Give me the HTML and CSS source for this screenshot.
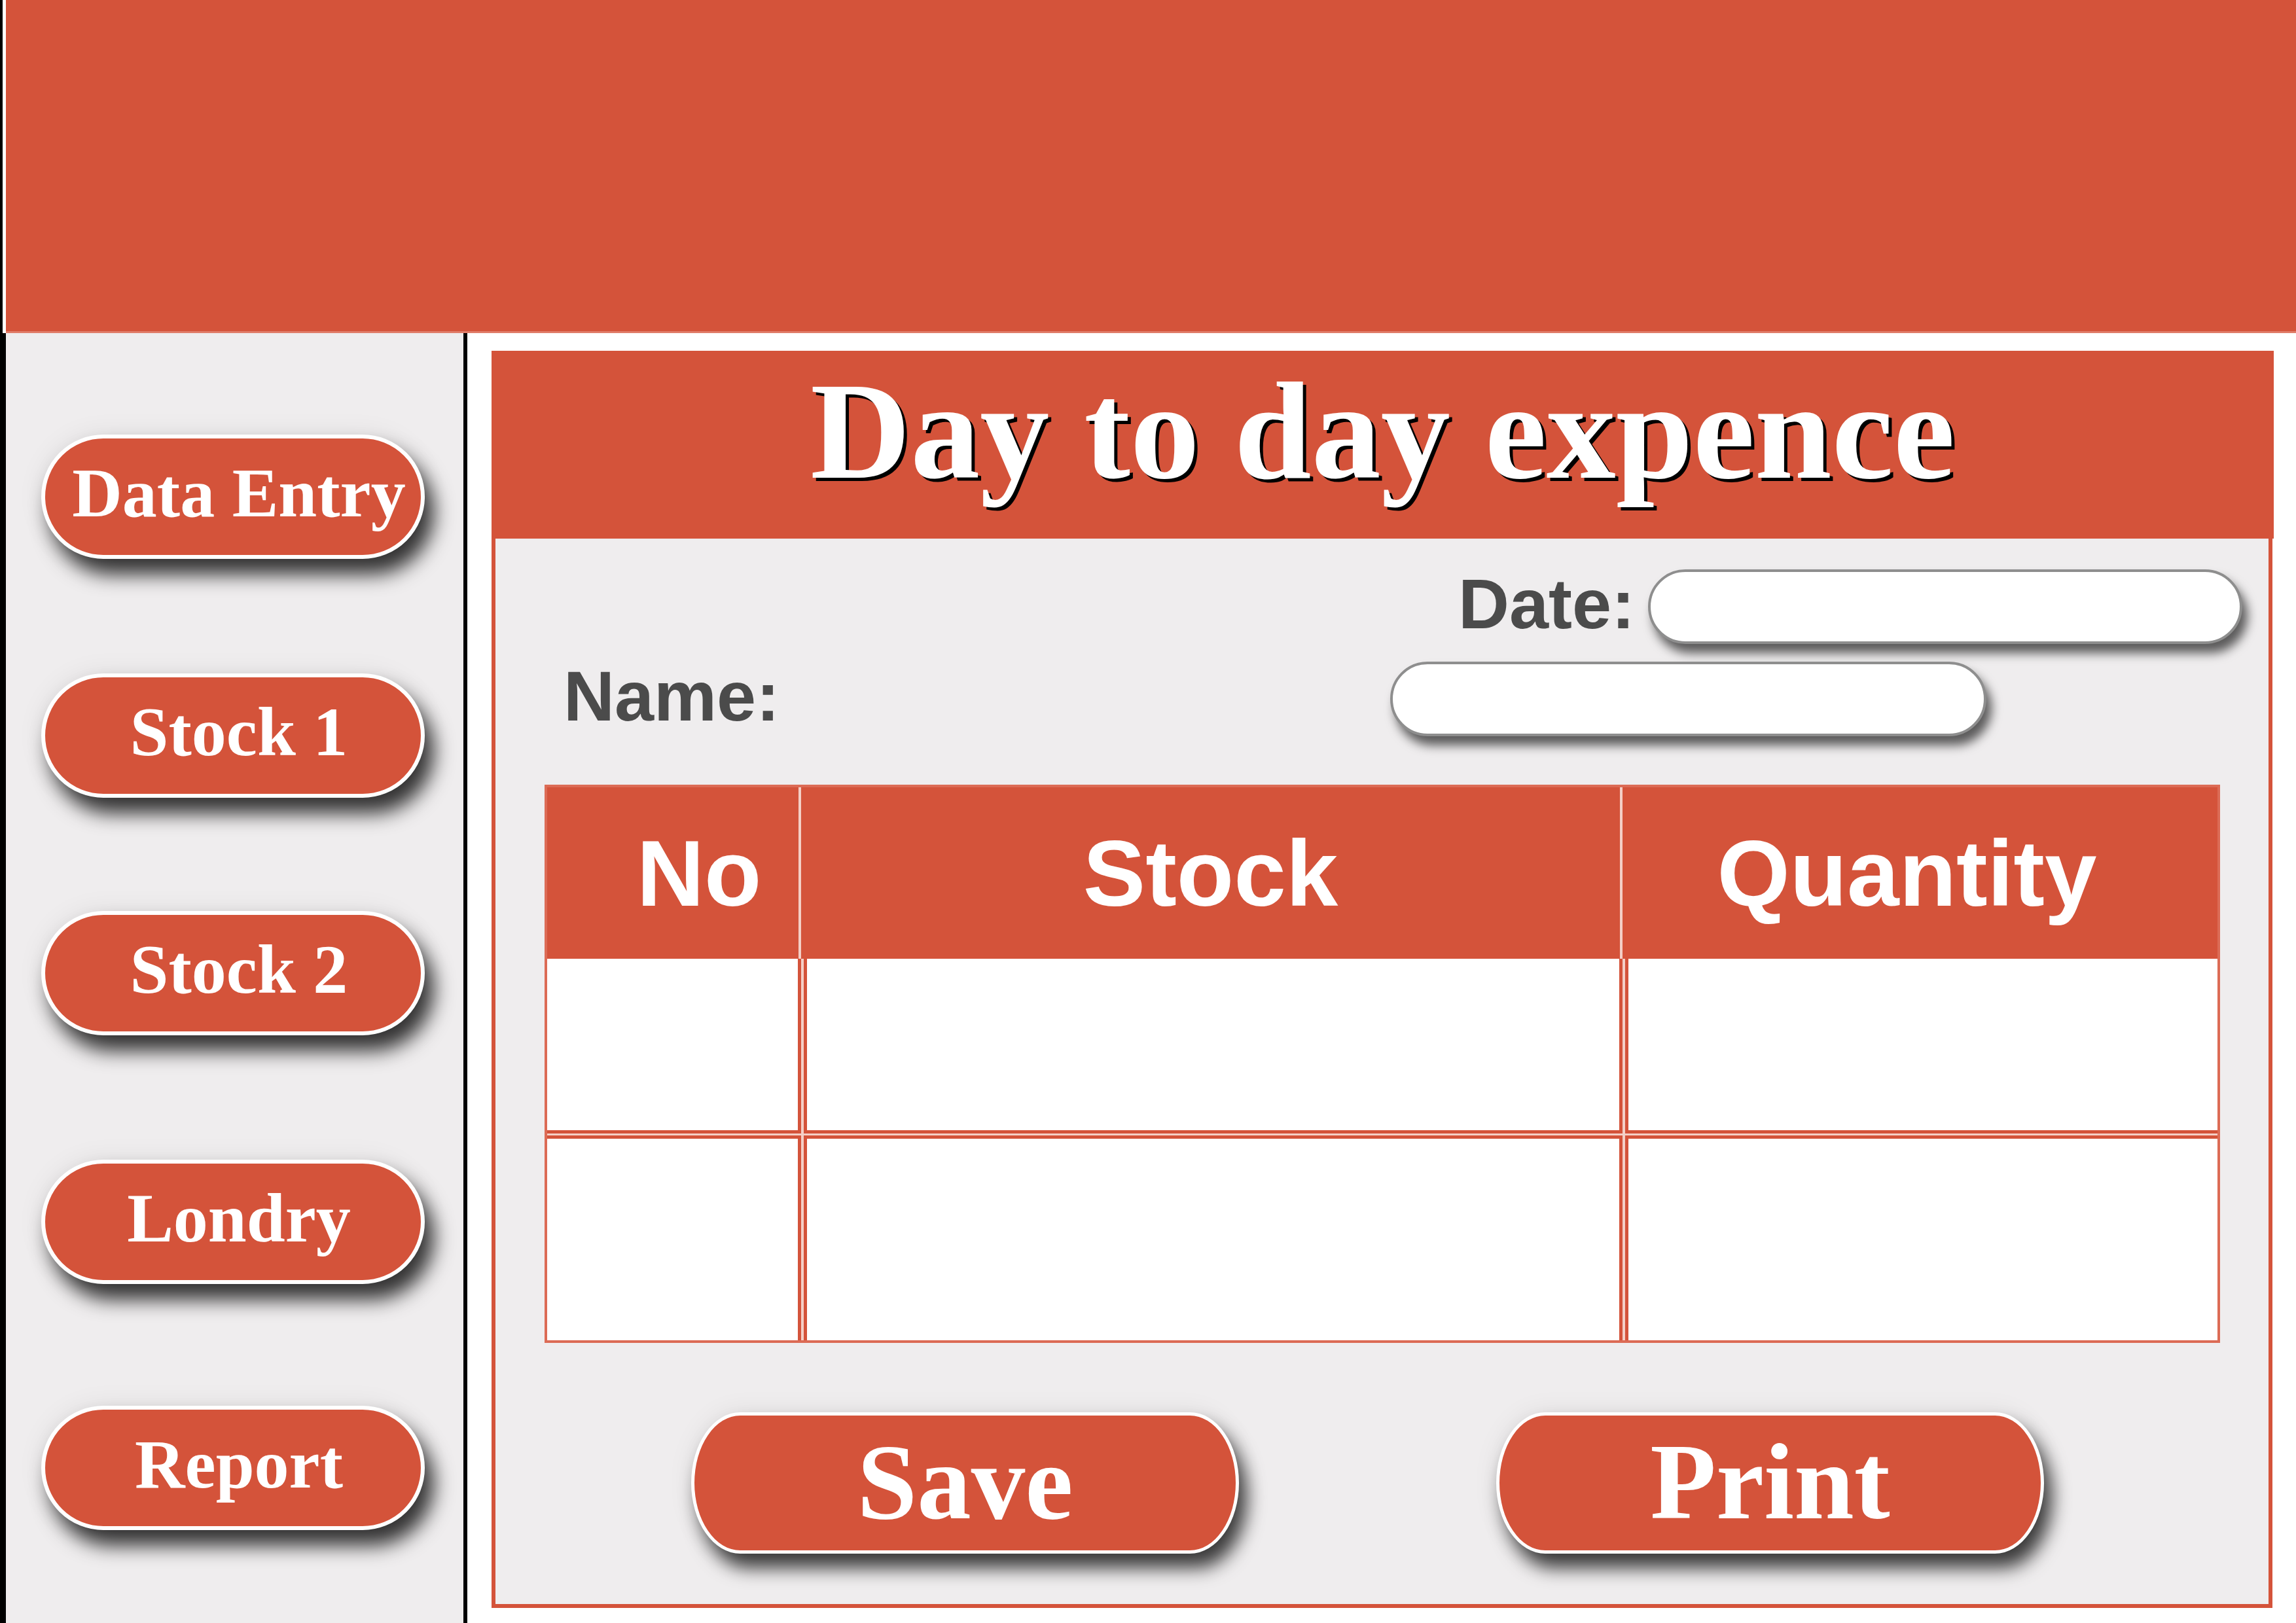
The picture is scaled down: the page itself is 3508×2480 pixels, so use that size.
FILE: index.html
```html
<!DOCTYPE html>
<html lang="en">
<head>
<meta charset="utf-8">
<title>Day to day expence</title>
<link rel="stylesheet" href="styles.css">
</head>
<body>
<div class="page">
  <header class="topbar"></header>
  <div class="lower">
    <nav class="sidebar">
      <button class="nav-btn nav-1">Data Entry</button>
      <button class="nav-btn nav-2">Stock 1</button>
      <button class="nav-btn nav-3">Stock 2</button>
      <button class="nav-btn nav-4">Londry</button>
      <button class="nav-btn nav-5">Report</button>
    </nav>
    <div class="divider"></div>
    <main class="main">
      <section class="panel">
        <h1 class="panel-title">Day to day expence</h1>
        <div class="panel-body">
          <div class="row-date">
            <label class="field-label">Date:</label>
            <div class="field date-field"></div>
          </div>
          <div class="row-name">
            <label class="field-label">Name:</label>
            <div class="field name-field"></div>
          </div>
          <div class="tbl">
            <div class="th th-no">No</div>
            <div class="th">Stock</div>
            <div class="th th-qty">Quantity</div>
            <div class="td r1 c1"></div>
            <div class="td r1 c2"></div>
            <div class="td r1 c3"></div>
            <div class="td r2 c1"></div>
            <div class="td r2 c2"></div>
            <div class="td r2 c3"></div>
          </div>
          <div class="actions">
            <button class="act-btn">Save</button>
            <button class="act-btn">Print</button>
          </div>
        </div>
      </section>
    </main>
  </div>
</div>
</body>
</html>
```

FILE: styles.css
```css
* { box-sizing: border-box; }

html, body {
  margin: 0;
  padding: 0;
}

body {
  width: 3508px;
  height: 2480px;
  overflow: hidden;
  background: #ffffff;
  border-left: 4px solid #000000;
  font-family: "Liberation Serif", "Times New Roman", serif;
}

.page {
  display: flex;
  flex-direction: column;
  height: 2480px;
}

.topbar {
  height: 509px;
  margin-left: 5px;
  background: #d4533a;
  border-bottom: 3px solid #e07d69;
  flex: none;
}

.lower {
  flex: 1;
  display: flex;
}

.sidebar {
  width: 704px;
  flex: none;
  background: #efedee;
  border-left: 5px solid #000000;
  padding: 0 0 0 54px;
  display: flex;
  flex-direction: column;
}

.nav-1 { margin-top: 155px; }
.nav-2 { margin-top: 175px; }
.nav-3 { margin-top: 173px; }
.nav-4 { margin-top: 190px; }
.nav-5 { margin-top: 186px; }

.nav-btn {
  width: 586px;
  height: 190px;
  flex: none;
  border: 6px solid #ffffff;
  border-radius: 95px;
  background: #d4533a;
  color: #ffffff;
  font-family: "Liberation Serif", "Times New Roman", serif;
  font-weight: bold;
  font-size: 106px;
  line-height: 1;
  padding: 0 0 10px 18px;
  box-shadow: 0 0 40px rgba(0, 0, 0, 0.07), 14px 24px 30px rgba(0, 0, 0, 0.78);
  display: flex;
  align-items: center;
  justify-content: center;
  white-space: nowrap;
}

.divider {
  width: 6px;
  flex: none;
  background: #000000;
}

.main {
  flex: 1;
  padding: 27px 34px 0 37px;
}

.panel {
  width: 2723px;
}

.panel-title {
  margin: 0;
  height: 287px;
  background: #d4533a;
  color: #ffffff;
  font-family: "Liberation Serif", "Times New Roman", serif;
  font-weight: bold;
  font-size: 212px;
  line-height: 212px;
  padding-top: 17px;
  text-align: center;
  text-shadow: 5px 5px 0 #000000;
  white-space: nowrap;
}

.panel-body {
  width: 2721px;
  background: #efedee;
  border-left: 6px solid #d4533a;
  border-right: 6px solid #d4533a;
  border-bottom: 6px solid #d4533a;
  padding: 47px 0 77px 0;
  display: flex;
  flex-direction: column;
}

.row-date {
  display: flex;
  justify-content: flex-end;
  align-items: center;
  gap: 20px;
  padding-right: 40px;
  height: 114px;
}

.row-name {
  display: flex;
  justify-content: space-between;
  align-items: center;
  padding: 0 431px 0 104px;
  height: 114px;
  margin-top: 27px;
}

.field-label {
  font-family: "Liberation Sans", Arial, sans-serif;
  font-weight: bold;
  font-size: 108px;
  color: #4b4b4b;
  line-height: 1;
  padding-bottom: 8px;
}

.field {
  height: 114px;
  background: #ffffff;
  border: 4px solid #8e8e8e;
  border-radius: 57px;
  box-shadow: 8px 14px 16px rgba(0, 0, 0, 0.62);
}

.date-field { width: 908px; }
.name-field { width: 911px; }

.tbl {
  margin: 74px 0 0 75px;
  width: 2560px;
  display: grid;
  grid-template-columns: 388px 1255px 909px;
  grid-template-rows: 262px 267px 316px;
  border: 4px solid #dc6b55;
  background: #f4cfc6;
}

.th {
  background: #d4533a;
  color: #ffffff;
  font-family: "Liberation Sans", Arial, sans-serif;
  font-weight: bold;
  font-size: 143px;
  display: flex;
  align-items: center;
  justify-content: center;
  line-height: 1;
  border-right: 4px solid #f4cfc6;
}

.th-no { padding-left: 80px; }
.th-qty { padding-right: 40px; border-right: none; }

.td {
  background: #ffffff;
}

.r1 { border-bottom: 5px solid #d4533a; }
.r2 { border-top: 5px solid #d4533a; margin-top: 3px; }
.c1 { border-right: 5px solid #d4533a; }
.c2 { border-left: 5px solid #d4533a; border-right: 5px solid #d4533a; margin-left: 4px; }
.c3 { border-left: 5px solid #d4533a; margin-left: 4px; }

.actions {
  display: flex;
  gap: 393px;
  padding-left: 299px;
  margin-top: 106px;
}

.act-btn {
  width: 837px;
  height: 216px;
  border: 5px solid #ffffff;
  border-radius: 75px / 108px;
  background: #d4533a;
  color: #ffffff;
  font-family: "Liberation Serif", "Times New Roman", serif;
  font-weight: bold;
  font-size: 165px;
  line-height: 1;
  padding: 0 0 4px 0;
  box-shadow: 0 0 40px rgba(0, 0, 0, 0.07), 12px 22px 28px rgba(0, 0, 0, 0.75);
  display: flex;
  align-items: center;
  justify-content: center;
}
```
